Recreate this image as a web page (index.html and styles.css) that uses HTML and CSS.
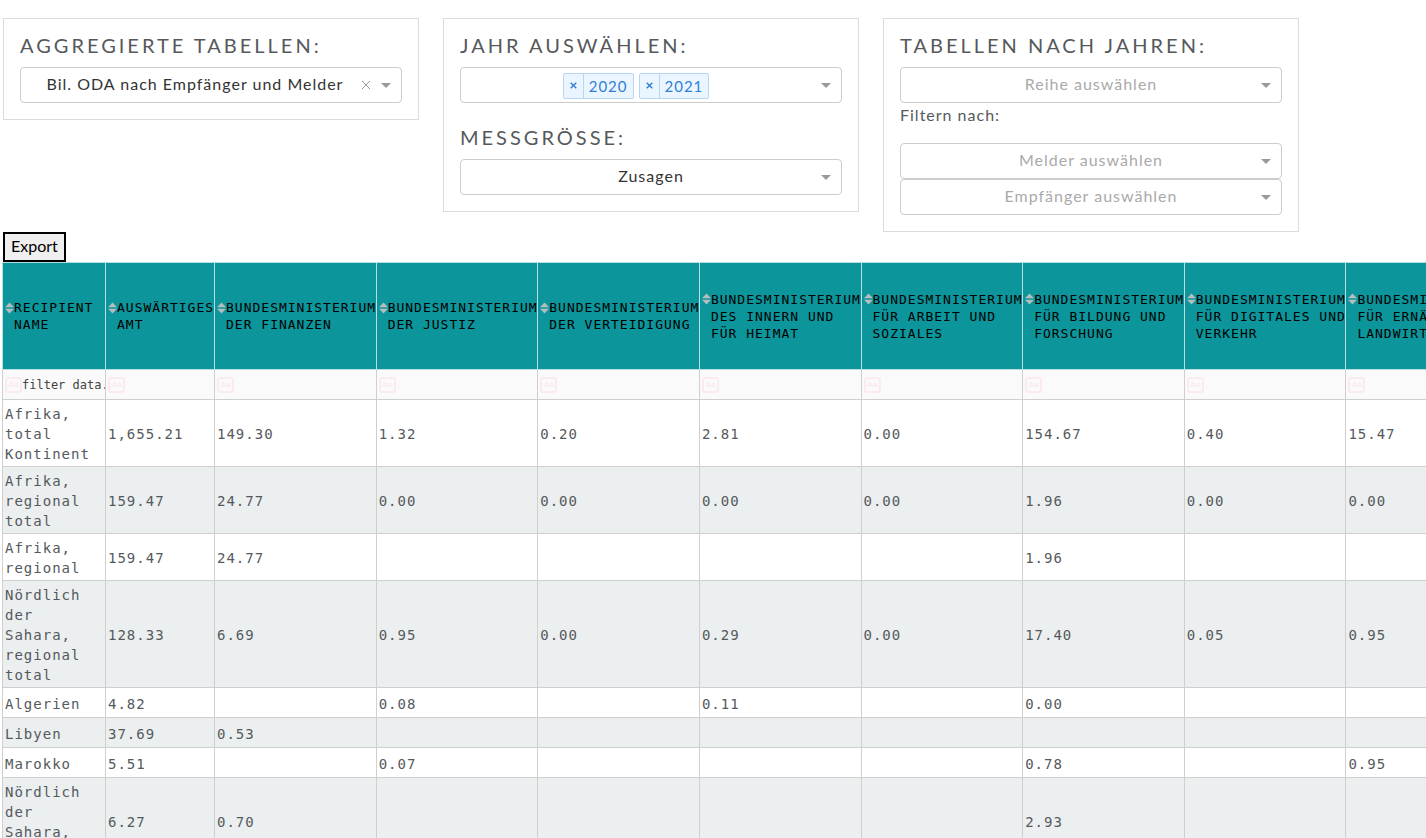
FILE: index.html
```html
<!DOCTYPE html>
<html lang="de">
<head>
<meta charset="utf-8">
<title>ODA Tabellen</title>
<link rel="stylesheet" href="styles.css">
</head>
<body>
<svg class="sprite" aria-hidden="true">
  <symbol id="arrow" viewBox="0 0 10 5"><path d="M0 0h10L5 5z"/></symbol>
  <symbol id="sort" viewBox="0 0 9 12"><path d="M4.500 0.500 9 5.300H0zM0 6.700h9L4.500 11.500z"/></symbol>
  <symbol id="cross" viewBox="0 0 10 10"><path d="M1 1l8 8M9 1l-8 8"/></symbol>
</svg>
<main class="page">
  <section class="cards">
    <div class="card">
      <h2><label for="agg">Aggregierte Tabellen:</label></h2>
      <div class="dropdown clearable">
        <select id="agg"><option>Bil. ODA nach Empfänger und Melder</option></select>
        <div class="tools">
          <button class="clear" aria-label="Auswahl löschen"><svg><use href="#cross"/></svg></button>
          <svg class="arrow"><use href="#arrow"/></svg>
        </div>
      </div>
    </div>
    <div class="card">
      <h2 id="year-label">Jahr auswählen:</h2>
      <div class="multi" role="group" aria-labelledby="year-label">
        <div class="chips">
          <span class="chip"><button aria-label="2020 entfernen"><svg><use href="#cross"/></svg></button><span>2020</span></span>
          <span class="chip"><button aria-label="2021 entfernen"><svg><use href="#cross"/></svg></button><span>2021</span></span>
        </div>
        <button class="open" aria-label="Jahre öffnen"><svg class="arrow"><use href="#arrow"/></svg></button>
      </div>
      <h2 class="next"><label for="measure">Messgrösse:</label></h2>
      <div class="dropdown">
        <select id="measure"><option>Zusagen</option></select>
        <div class="tools"><svg class="arrow"><use href="#arrow"/></svg></div>
      </div>
    </div>
    <div class="card">
      <h2><label for="series">Tabellen nach Jahren:</label></h2>
      <div class="dropdown empty">
        <select id="series"><option>Reihe auswählen</option></select>
        <div class="tools"><svg class="arrow"><use href="#arrow"/></svg></div>
      </div>
      <p class="hint">Filtern nach:</p>
      <div class="dropdown empty">
        <select aria-label="Melder"><option>Melder auswählen</option></select>
        <div class="tools"><svg class="arrow"><use href="#arrow"/></svg></div>
      </div>
      <div class="dropdown empty">
        <select aria-label="Empfänger"><option>Empfänger auswählen</option></select>
        <div class="tools"><svg class="arrow"><use href="#arrow"/></svg></div>
      </div>
    </div>
  </section>

  <button class="export">Export</button>

  <table class="data">
    <colgroup><col class="col-name"><col class="col-aa"><col span="8"></colgroup>
    <thead>
      <tr class="heads">
        <th><div class="head"><button aria-label="Sortieren"><svg><use href="#sort"/></svg></button><span>Recipient Name</span></div></th>
        <th><div class="head"><button aria-label="Sortieren"><svg><use href="#sort"/></svg></button><span>Auswärtiges Amt</span></div></th>
        <th><div class="head"><button aria-label="Sortieren"><svg><use href="#sort"/></svg></button><span>Bundesministerium der Finanzen</span></div></th>
        <th><div class="head"><button aria-label="Sortieren"><svg><use href="#sort"/></svg></button><span>Bundesministerium der Justiz</span></div></th>
        <th><div class="head"><button aria-label="Sortieren"><svg><use href="#sort"/></svg></button><span>Bundesministerium der Verteidigung</span></div></th>
        <th><div class="head"><button aria-label="Sortieren"><svg><use href="#sort"/></svg></button><span>Bundesministerium des Innern und<br>für Heimat</span></div></th>
        <th><div class="head"><button aria-label="Sortieren"><svg><use href="#sort"/></svg></button><span>Bundesministerium für Arbeit und<br>Soziales</span></div></th>
        <th><div class="head"><button aria-label="Sortieren"><svg><use href="#sort"/></svg></button><span>Bundesministerium für Bildung und<br>Forschung</span></div></th>
        <th><div class="head"><button aria-label="Sortieren"><svg><use href="#sort"/></svg></button><span>Bundesministerium für Digitales und<br>Verkehr</span></div></th>
        <th><div class="head"><button aria-label="Sortieren"><svg><use href="#sort"/></svg></button><span>Bundesministerium für Ernährung und Landwirtschaft</span></div></th>
      </tr>
      <tr class="filters">
        <td><div class="filter"><button>Aa</button><input aria-label="Filter Recipient Name" placeholder="filter data..."></div></td>
        <td><div class="filter"><button>Aa</button><input aria-label="Filter Auswärtiges Amt"></div></td>
        <td><div class="filter"><button>Aa</button><input aria-label="Filter Finanzen"></div></td>
        <td><div class="filter"><button>Aa</button><input aria-label="Filter Justiz"></div></td>
        <td><div class="filter"><button>Aa</button><input aria-label="Filter Verteidigung"></div></td>
        <td><div class="filter"><button>Aa</button><input aria-label="Filter Innern"></div></td>
        <td><div class="filter"><button>Aa</button><input aria-label="Filter Arbeit"></div></td>
        <td><div class="filter"><button>Aa</button><input aria-label="Filter Bildung"></div></td>
        <td><div class="filter"><button>Aa</button><input aria-label="Filter Digitales"></div></td>
        <td><div class="filter"><button>Aa</button><input aria-label="Filter Ernährung"></div></td>
      </tr>
    </thead>
    <tbody>
      <tr><td>Afrika, total Kontinent</td><td>1,655.21</td><td>149.30</td><td>1.32</td><td>0.20</td><td>2.81</td><td>0.00</td><td>154.67</td><td>0.40</td><td>15.47</td></tr>
      <tr><td>Afrika, regional total</td><td>159.47</td><td>24.77</td><td>0.00</td><td>0.00</td><td>0.00</td><td>0.00</td><td>1.96</td><td>0.00</td><td>0.00</td></tr>
      <tr><td>Afrika, regional</td><td>159.47</td><td>24.77</td><td></td><td></td><td></td><td></td><td>1.96</td><td></td><td></td></tr>
      <tr><td>Nördlich der Sahara, regional total</td><td>128.33</td><td>6.69</td><td>0.95</td><td>0.00</td><td>0.29</td><td>0.00</td><td>17.40</td><td>0.05</td><td>0.95</td></tr>
      <tr><td>Algerien</td><td>4.82</td><td></td><td>0.08</td><td></td><td>0.11</td><td></td><td>0.00</td><td></td><td></td></tr>
      <tr><td>Libyen</td><td>37.69</td><td>0.53</td><td></td><td></td><td></td><td></td><td></td><td></td><td></td></tr>
      <tr><td>Marokko</td><td>5.51</td><td></td><td>0.07</td><td></td><td></td><td></td><td>0.78</td><td></td><td>0.95</td></tr>
      <tr><td>Nördlich der Sahara, regional</td><td>6.27</td><td>0.70</td><td></td><td></td><td></td><td></td><td>2.93</td><td></td><td></td></tr>
    </tbody>
  </table>
</main>
</body>
</html>
```
FILE: styles.css
```css
* { box-sizing: border-box; }

body {
  margin: 0;
  background: #fff;
  color: #55595c;
  font: 16px/24px Lato, "Open Sans", sans-serif;
}

button, input, select {
  font: inherit;
  color: inherit;
  letter-spacing: inherit;
}

button {
  padding: 0;
  border: 0;
  background: none;
  cursor: pointer;
}

.sprite {
  display: none;
}

.page {
  height: 100vh;
  padding: 18px 2px 0;
  overflow: auto;
  scrollbar-width: none;
}

.cards {
  display: grid;
  grid-template-columns: repeat(3, minmax(0, 416px));
  gap: 24px;
  align-items: start;
  padding-left: 1px;
  letter-spacing: 1px;
}

.card {
  padding: 15px 16px 16px;
  border: 1px solid #dcdcdc;
}

.card h2 {
  margin: 0 0 10px;
  font-size: 20px;
  line-height: 23px;
  font-weight: 400;
  letter-spacing: 3px;
  text-transform: uppercase;
}

.card .next {
  margin-top: 23px;
}

.hint {
  margin: 0 0 16px;
}

.dropdown {
  display: grid;
  align-items: center;
  color: #333;
}

.dropdown > * {
  grid-area: 1 / 1;
}

.dropdown select {
  width: 100%;
  height: 36px;
  padding: 0 10px 2px;
  border: 1px solid #ccc;
  border-radius: 4px;
  background: #fff;
  appearance: none;
  text-align: center;
  text-align-last: center;
}

.clearable select {
  padding-right: 42px;
}

.empty {
  color: #aaa;
}

.tools {
  display: flex;
  align-items: center;
  justify-self: end;
  gap: 10px;
  padding-right: 11px;
  pointer-events: none;
}

.arrow {
  display: block;
  width: 10px;
  height: 5px;
  fill: #999;
}

.clear {
  pointer-events: auto;
}

.clear svg {
  display: block;
  width: 10px;
  height: 10px;
  stroke: #999;
}

.multi {
  display: flex;
  align-items: center;
  height: 36px;
  border: 1px solid #ccc;
  border-radius: 4px;
}

.chips {
  display: flex;
  flex: 1;
  justify-content: center;
  gap: 5px;
  padding-top: 1px;
}

.chip {
  display: flex;
  height: 26px;
  border: 1px solid #b5d6f5;
  border-radius: 2px;
  background: #ebf5ff;
  color: #2f7fd6;
  font-size: 15px;
  line-height: 24px;
}

.chip button {
  padding: 0 6px;
  border-right: 1px solid #b5d6f5;
}

.chip button svg {
  display: block;
  width: 7px;
  height: 7px;
  stroke: #2f7fd6;
  stroke-width: 2;
}

.chip > span {
  padding: 0 5px;
}

.open {
  padding: 0 10px;
}

.export {
  display: block;
  height: 30px;
  margin-left: 1px;
  padding: 0 6px 2px;
  border: 2px solid #000;
  background: #efefef;
  color: #000;
}

.data {
  width: 1506px;
  border-collapse: collapse;
  table-layout: fixed;
  font: 14px/20px "DejaVu Sans Mono", monospace;
  letter-spacing: 1px;
}

.col-name {
  width: 103px;
}

.col-aa {
  width: 109px;
}

.data td {
  height: 30px;
  padding: 4px 2px 2px;
  border: 1px solid #cfcfcf;
}

.data tbody tr:nth-child(even) {
  background: #ebeff0;
}

.data th {
  height: 107px;
  padding: 0 0 0 2px;
  border: 1px solid #b9dfe1;
  background: #0c959b;
  color: #000;
  font-size: 13px;
  line-height: 17px;
  font-weight: 400;
  text-align: left;
  text-transform: uppercase;
}

.head {
  display: flex;
  align-items: flex-start;
}

.head button {
  display: flex;
  align-items: center;
  height: 17px;
}

.head svg {
  width: 9px;
  height: 12px;
  fill: #b5bdbe;
}

.data .filters td {
  padding: 0 0 0 2px;
  background: #fafafa;
}

.filter {
  display: flex;
  align-items: center;
  letter-spacing: 0;
}

.filter button {
  flex: none;
  width: 17px;
  height: 16px;
  border: 2px solid #fbeaf1;
  border-radius: 3px;
  color: #fbeaf1;
  font: bold 8px/12px "Liberation Sans", sans-serif;
}

.filter input {
  flex: 1;
  min-width: 0;
  padding: 0;
  border: 0;
  outline: 0;
  background: none;
  font-size: 12px;
}

.filter input::placeholder {
  color: #444;
}
```
